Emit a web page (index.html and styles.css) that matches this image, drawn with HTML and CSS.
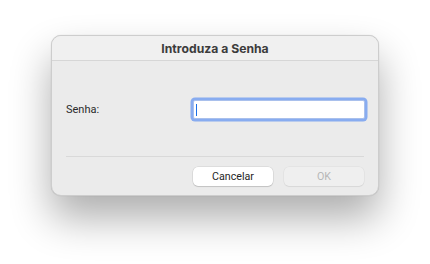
FILE: index.html
```html
<!DOCTYPE html>
<html lang="pt">
<head>
<meta charset="utf-8">
<title>Introduza a Senha</title>
<link rel="stylesheet" href="styles.css">
</head>
<body>
<div class="stage">
  <div class="dialog">
    <div class="titlebar">Introduza a Senha</div>
    <div class="content">
      <div class="field-row">
        <label class="label" for="pw">Senha:</label>
        <div class="input" id="pw"><span class="caret"></span></div>
      </div>
      <div class="separator"></div>
      <div class="buttons">
        <button class="btn">Cancelar</button>
        <button class="btn disabled">OK</button>
      </div>
    </div>
  </div>
</div>
</body>
</html>
```
FILE: styles.css
```css
html, body {
  margin: 0;
  padding: 0;
  background: #ffffff;
  width: 430px;
  height: 264px;
  overflow: hidden;
}
.stage {
  padding-top: 35px;
  display: flex;
  justify-content: center;
}
.dialog {
  width: 328px;
  height: 161px;
  box-sizing: border-box;
  background: #ebebeb;
  border: 1px solid #cdcdcd;
  border-radius: 10px;
  box-shadow: 0 22px 40px rgba(0, 0, 0, 0.32), 0 0 1px rgba(0,0,0,0.2);
  overflow: hidden;
  font-family: Roboto, "Liberation Sans", sans-serif;
  display: flex;
  flex-direction: column;
}
.titlebar {
  height: 25px;
  flex: none;
  background: #f0f0f0;
  border-bottom: 1px solid #d6d6d6;
  display: flex;
  align-items: center;
  justify-content: center;
  font-family: Inter, "Liberation Sans", sans-serif;
  font-size: 12.2px;
  font-weight: 700;
  color: #3c3c3c;
  padding-top: 1px;
  box-sizing: border-box;
}
.content {
  padding: 0 13px 0 13px;
  display: flex;
  flex-direction: column;
}
.field-row {
  margin-top: 39px;
  height: 19px;
  display: flex;
  align-items: center;
  justify-content: space-between;
}
.label {
  font-size: 11px;
  color: #2a2a2a;
  padding-left: 1px;
}
.input {
  width: 172px;
  height: 19px;
  box-sizing: border-box;
  background: #ffffff;
  border: 1px solid #a9c0ec;
  box-shadow: 0 0 0 2.5px #88acf0;
  border-radius: 2px;
  display: flex;
  align-items: center;
  padding-left: 1.5px;
}
.caret {
  width: 1.5px;
  height: 12px;
  background: #1a6fe6;
}
.separator {
  margin: 37px 1px 0 1px;
  height: 1px;
  background: #d9d9d9;
}
.buttons {
  margin-top: 10px;
  display: flex;
  justify-content: flex-end;
  gap: 11px;
  padding-right: 1px;
}
.btn {
  width: 80px;
  height: 19px;
  padding: 0;
  margin: 0;
  border: none;
  border-radius: 5px;
  background: #ffffff;
  box-shadow: 0 0 0 0.5px rgba(0,0,0,0.12), 0 1px 1px rgba(0,0,0,0.12);
  font-family: Roboto, "Liberation Sans", sans-serif;
  font-size: 10.7px;
  color: #262626;
}
.btn.disabled {
  background: #efefef;
  color: #b7b7b7;
  box-shadow: 0 0 0 0.5px rgba(0,0,0,0.06), 0 1px 1px rgba(0,0,0,0.05);
}
```
